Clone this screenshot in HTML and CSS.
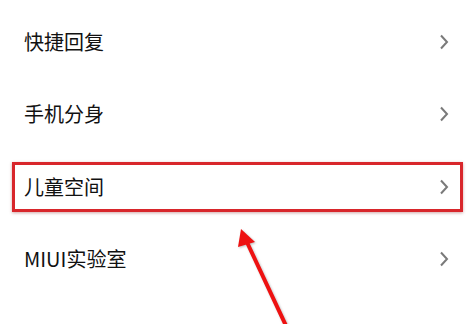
FILE: index.html
```html
<!DOCTYPE html>
<html lang="zh">
<head>
<meta charset="utf-8">
<link rel="stylesheet" href="styles.css">
</head>
<body>
<div class="screen">
  <ul class="list">
    <li class="row"><span class="label">快捷回复</span><svg class="chev" viewBox="0 0 10 16"><path d="M2 1.5 L8 8 L2 14.5"/></svg></li>
    <li class="row"><span class="label">手机分身</span><svg class="chev" viewBox="0 0 10 16"><path d="M2 1.5 L8 8 L2 14.5"/></svg></li>
    <li class="row"><span class="label">儿童空间</span><svg class="chev" viewBox="0 0 10 16"><path d="M2 1.5 L8 8 L2 14.5"/></svg></li>
    <li class="row"><span class="label">MIUI实验室</span><svg class="chev" viewBox="0 0 10 16"><path d="M2 1.5 L8 8 L2 14.5"/></svg></li>
  </ul>
  <div class="highlight"></div>
  <svg class="arrow" viewBox="0 0 474 324" width="474" height="324">
    <line x1="288" y1="330" x2="245" y2="238" stroke="#ee1111" stroke-width="4" stroke-linecap="round"/>
    <polygon points="241,229 255,242 238,247" fill="#ee1111"/>
  </svg>
</div>
</body>
</html>
```
FILE: styles.css
```css
html, body {
  margin: 0;
  padding: 0;
  background: #ffffff;
}
.screen {
  position: relative;
  width: 474px;
  height: 324px;
  overflow: hidden;
  background: #ffffff;
  font-family: "Noto Sans CJK SC", "Noto Sans", sans-serif;
}
.list {
  list-style: none;
  margin: 0;
  padding: 6px 0 0 0;
}
.row {
  height: 72.3px;
  display: flex;
  align-items: center;
  justify-content: space-between;
  padding: 0 25px 0 24px;
}
.label {
  font-size: 20px;
  color: #111111;
  line-height: 1;
}
.chev {
  width: 10px;
  height: 16px;
  fill: none;
  stroke: #7a7a7a;
  stroke-width: 2;
}
.highlight {
  position: absolute;
  left: 12px;
  top: 162px;
  width: 451px;
  height: 50px;
  box-sizing: border-box;
  border: 3px solid #d8262b;
  box-shadow: 0 1px 3px rgba(120, 0, 0, 0.35);
}
.arrow {
  position: absolute;
  left: 0;
  top: 0;
  filter: drop-shadow(1px 1px 1px rgba(0,0,0,0.25));
}
```
